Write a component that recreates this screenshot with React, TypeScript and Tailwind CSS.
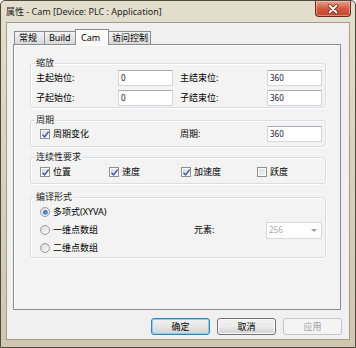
import React from "react";

function Check({ checked, label, className = "" }: { checked: boolean; label: string; className?: string }) {
  return (
    <div className={`flex items-center ${className}`}>
      <div className="w-[10px] h-[10px] border border-[#8f8f8f] bg-white p-px flex">
        <div className="flex-1 bg-gradient-to-br from-[#d3d9e2] to-[#f5f7fa] relative">
          {checked && (
            <svg viewBox="0 0 8 8" className="absolute -top-px -left-px w-[9px] h-[9px]">
              <path d="M1.3 4.2 L3.2 6.2 L6.8 1.4" fill="none" stroke="#3b55a0" strokeWidth="1.3" />
            </svg>
          )}
        </div>
      </div>
      <span className="ml-[3px]">{label}</span>
    </div>
  );
}

function Radio({ checked, label }: { checked: boolean; label: string }) {
  return (
    <div className="flex items-center pl-[9px]">
      <div className="w-[10px] h-[10px] rounded-full border border-[#9a9a9a] bg-gradient-to-br from-[#dcdcdc] to-[#fafafa] flex items-center justify-center">
        {checked && <div className="w-[5px] h-[5px] rounded-full bg-gradient-to-br from-[#2f5f9e] to-[#7fb2e6]" />}
      </div>
      <span className="ml-[3px]">{label}</span>
    </div>
  );
}

function Input({ value }: { value: string }) {
  return (
    <div className="w-[55px] h-[16px] bg-white border border-[#d3d6db] border-t-[#abadb3] flex items-center pl-[2px] text-[8px] text-[#1a1030]">
      {value}
    </div>
  );
}

function Group({ title, className = "", children }: { title: string; className?: string; children: React.ReactNode }) {
  return (
    <fieldset className={`w-[296px] border border-[#d5dfe5] rounded-[3px] shadow-[inset_1px_1px_0_#fff,1px_1px_0_#fff] ${className}`}>
      <legend className="ml-[4px] px-[1px] leading-[12px] text-[#1a1a1a]">{title}</legend>
      {children}
    </fieldset>
  );
}

function Button({ label, variant }: { label: string; variant: "default" | "normal" | "disabled" }) {
  const base = "w-[59px] h-[17px] rounded-[3px] flex items-center justify-center";
  if (variant === "disabled")
    return <div className={`${base} border border-[#c3c7ca] bg-[#f4f4f4] text-[#9f9f9f]`}>{label}</div>;
  if (variant === "default")
    return (
      <div className={`${base} border border-[#3c7fb1] bg-gradient-to-b from-[#f2f2f2] via-[#e6e6e6] to-[#d2d2d2] shadow-[inset_0_0_0_1px_#7fd3f7] text-black`}>
        {label}
      </div>
    );
  return (
    <div className={`${base} border border-[#707070] bg-gradient-to-b from-[#f2f2f2] via-[#ebebeb] to-[#cfcfcf] shadow-[inset_0_0_0_1px_#fcfcfc] text-black`}>
      {label}
    </div>
  );
}

export default function App() {
  return (
    <div className="w-[356px] h-[348px] flex flex-col border border-[#4f4a3c] rounded-t-[5px] bg-gradient-to-b from-[#e4dece] via-[#d8d1bb] to-[#cfc7ae] text-[9px] leading-[12px] text-black [font-family:'Noto_Sans','Noto_Sans_CJK_SC',sans-serif] overflow-hidden">
      <div className="h-[21px] flex justify-between">
        <span className="pl-[5px] pt-[5px] text-[9px] leading-[12px] text-[#1e1e1e]">属性 - Cam [Device: PLC : Application]</span>
        <div className="mr-[4px] w-[36px] h-[16px] rounded-b-[4px] border border-t-0 border-[#6b2d22] bg-gradient-to-b from-[#e8a18f] via-[#d35a43] to-[#c3452c] shadow-[inset_0_0_0_1px_rgba(255,220,210,0.45)] flex items-center justify-center">
          <svg viewBox="0 0 12 10" className="w-[12px] h-[10px]">
            <path d="M2.5 1.5 L9.5 8.5 M9.5 1.5 L2.5 8.5" stroke="#5a2a22" strokeWidth="3.4" strokeLinecap="round" />
            <path d="M2.5 1.5 L9.5 8.5 M9.5 1.5 L2.5 8.5" stroke="#ffffff" strokeWidth="1.8" strokeLinecap="round" />
          </svg>
        </div>
      </div>
      <div className="flex-1 mx-[5px] mb-[7px] bg-[#f0f0f0] border border-[#a59d86] flex flex-col">
        <div className="pt-[6px] pl-[6px]">
          <div className="h-[15px] flex items-end pl-px">
            <div className="w-[31px] h-[13px] border border-b-0 border-[#898c95] bg-gradient-to-b from-[#f3f3f3] to-[#d9d9d9] flex items-center pl-[4px]">常规</div>
            <div className="-ml-px w-[32px] h-[13px] border border-b-0 border-[#898c95] bg-gradient-to-b from-[#f3f3f3] to-[#d9d9d9] flex items-center pl-[4px]">Build</div>
            <div className="-ml-px w-[34px] h-[16px] -mb-px relative z-10 border border-b-0 border-[#898c95] bg-[#fbfbfb] flex items-center pl-[5px]">Cam</div>
            <div className="-ml-px w-[43px] h-[13px] border border-b-0 border-[#898c95] bg-gradient-to-b from-[#f3f3f3] to-[#d9d9d9] flex items-center pl-[3px]">访问控制</div>
          </div>
          <div className="w-[328px] h-[266px] border border-[#898c95] bg-[#f3f3f3] shadow-[inset_1px_1px_0_#fff] pt-[12px] pl-[16px]">
            <Group title="缩放">
              <div className="pt-px pb-px flex flex-col gap-[4px]">
                <div className="flex items-center h-[16px] pl-[5px]">
                  <span className="w-[82px]">主起始位:</span>
                  <Input value="0" />
                  <span className="ml-[7px] w-[87px]">主结束位:</span>
                  <Input value="360" />
                </div>
                <div className="flex items-center h-[16px] pl-[5px]">
                  <span className="w-[82px]">子起始位:</span>
                  <Input value="0" />
                  <span className="ml-[7px] w-[87px]">子结束位:</span>
                  <Input value="360" />
                </div>
              </div>
            </Group>
            <Group title="周期" className="mt-[6px]">
              <div className="pb-[4px] flex items-center h-[20px] pl-[9px]">
                <Check checked label="周期变化" className="w-[133px]" />
                <span className="ml-[7px] w-[87px]">周期:</span>
                <Input value="360" />
              </div>
            </Group>
            <Group title="连续性要求" className="mt-[4px]">
              <div className="pt-px pb-[3px]">
                <div className="flex items-center h-[16px] pl-[9px]">
                  <Check checked label="位置" className="w-[69px]" />
                  <Check checked label="速度" className="w-[72px]" />
                  <Check checked label="加速度" className="w-[76px]" />
                  <Check checked={false} label="跃度" />
                </div>
              </div>
            </Group>
            <Group title="编译形式" className="mt-[7px]">
              <div className="flex flex-col">
                <div className="h-[18px] flex items-center">
                  <Radio checked label="多项式(XYVA)" />
                </div>
                <div className="h-[18px] flex items-center">
                  <div className="w-[163px]">
                    <Radio checked={false} label="一维点数组" />
                  </div>
                  <span className="w-[72px]">元素:</span>
                  <div className="w-[56px] h-[17px] border border-[#d9d9d9] bg-white flex items-center justify-between pl-[2px] pr-[4px] text-[8px] text-[#a8a8a8]">
                    <span>256</span>
                    <svg viewBox="0 0 6 3" className="w-[6px] h-[3px]">
                      <path d="M0 0 L6 0 L3 3 Z" fill="#a0a0a0" />
                    </svg>
                  </div>
                </div>
                <div className="h-[18px] flex items-center">
                  <Radio checked={false} label="二维点数组" />
                </div>
              </div>
            </Group>
          </div>
        </div>
        <div className="mt-[8px] pr-[7px] flex justify-end gap-[7px]">
          <Button label="确定" variant="default" />
          <Button label="取消" variant="normal" />
          <Button label="应用" variant="disabled" />
        </div>
      </div>
    </div>
  );
}
